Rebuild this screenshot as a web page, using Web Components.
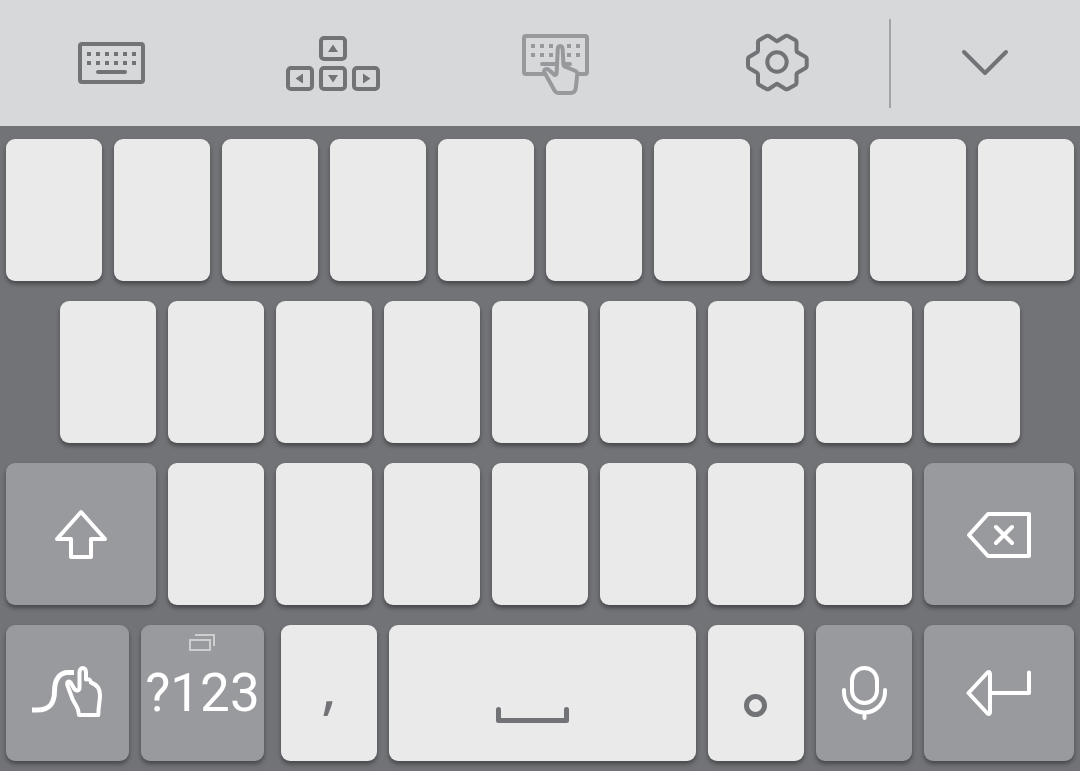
<!DOCTYPE html>
<html lang="en">
<head>
<meta charset="utf-8">
<meta name="viewport" content="width=device-width, initial-scale=1">
<title>Soft keyboard</title>
<style>
  body { margin: 0; background: #727377; font-family: Roboto, "Noto Sans", sans-serif; }
</style>
</head>
<body>
<soft-keyboard></soft-keyboard>
<script>
// Every glyph is drawn on a 96 x 96 field whose origin is its centre.
const ICONS = {
  keyboard: `<rect x="-31" y="-19" width="63" height="38" rx="2"/>
    <path d="M-13 9H14"/>
    <path class="solid" d="M-24-11h4v4h-4zM-15-11h4v4h-4zM-6-11h4v4h-4zM3-11h4v4h-4zM12-11h4v4h-4zM21-11h4v4h-4zM-24-2h4v4h-4zM-15-2h4v4h-4zM-6-2h4v4h-4zM3-2h4v4h-4zM12-2h4v4h-4zM21-2h4v4h-4z"/>`,
  arrows: `<rect x="-12" y="-25" width="24" height="21" rx="3"/>
    <rect x="-45" y="5" width="24" height="21" rx="3"/>
    <rect x="-12" y="5" width="24" height="21" rx="3"/>
    <rect x="21" y="5" width="24" height="21" rx="3"/>
    <path class="solid" d="M-5-11H5L0-18.500zM-5 12H5L0 19.500zM-37.500 15.500L-30 10.500V20.500zM37.500 15.500L30 10.500V20.500z"/>`,
  touch: `<path d="M-12 11H-29a2 2 0 0 1-2-2V-25a2 2 0 0 1 2-2H30a2 2 0 0 1 2 2V9a2 2 0 0 1-2 2H23"/>
    <path d="M-13 1H2M9 1H15"/>
    <path class="solid" d="M-24-19h4v4h-4zM-15-19h4v4h-4zM-6-19h4v4h-4zM12-19h4v4h-4zM21-19h4v4h-4zM-24-10h4v4h-4zM-15-10h4v4h-4zM-6-10h4v4h-4zM12-10h4v4h-4zM21-10h4v4h-4z"/>
    <path d="M2.700-13C2.700-18.500 7.500-18.500 7.700-13L8.500 1.500Q8.500 3 10 3.700L19.500 7.500Q22.500 8.800 22.300 11L20.800 25Q20.200 30 15.500 30H4Q1 30-.500 27.500L-10.500 9.500C-12 6.500-8.500 5-6 7L-1 11.500Q1.300 13 1.600 10z"/>`,
  gear: `<path d="M-10.500-27Q-9.300-27.700-8.100-27L0-21.700L8.500-27Q9.700-27.700 10.900-27L18.500-22.800Q19.500-22.200 19.500-21V-12.500Q19.500-11.300 20.500-10.700L28.700-6Q29.700-5.400 29.700-4.200V3.200Q29.700 4.400 28.700 5L20.500 9.700Q19.500 10.300 19.500 11.500V20Q19.500 21.200 18.500 21.800L10.900 26Q9.700 26.700 8.500 26L0 20.700L-8.100 26Q-9.300 26.700-10.500 26L-18 21.800Q-19 21.200-19 20V11.500Q-19 10.300-20 9.700L-28 5Q-29 4.400-29 3.200V-4.200Q-29-5.400-28-6L-20-10.700Q-19-11.300-19-12.500V-21Q-19-22.200-18-22.800z"/>
    <circle cx="0" cy="-1" r="9.700"/>`,
  chevron: `<path d="M-22-11L-1 10L20-11"/>`,
  shift: `<path d="M0-22L24 5H10V23H-10V5H-24z"/>`,
  backspace: `<path d="M-30 1L-11-20H30V22H-11zM-3-7L13 9M13-7L-3 9"/>`,
  swipe: `<path class="broad" d="M-36 17H-31C-18 17-13.500 10-13.500-2C-13.500-14-8-20.500 0-20.500H6"/>
    <path d="M11.500-20.500C11.500-26.500 18-26.500 18-20.500V-13.500C21-14.500 22.500-13 23-10.500C30-8 32-4 32 2C32 9 30.300 13 30.300 22H11C11 14 7.500 13 4.500 6L-.500-7.500C-2-12 1.500-13 3.500-9L5.500-5.500C7.500-1.500 11.500-1.500 11.500-5z"/>`,
  space: `<path class="thick" d="M-44.500 16.500V27.500H23.500V16.500"/>`,
  dot: `<circle class="thick" cx="-.500" cy="12.500" r="9"/>`,
  mic: `<rect x="-12" y="-25" width="25" height="35" rx="12.500"/>
    <path d="M-20-3V-1A20.500 20.500 0 0 0 21-1V-3M.500 20V25"/>`,
  enter: `<path d="M-30.500 0L-11.500-20.500Q-9-22-9-19V19Q-9 22-11.500 20.500zM-9 0H30V-20.500"/>`
};

function attach(host, html) {
  const template = document.createElement('template');
  template.innerHTML = html;
  const root = host.attachShadow({ mode: 'open' });
  root.append(template.content.cloneNode(true));
  return root;
}

class KbIcon extends HTMLElement {
  connectedCallback() {
    if (this.shadowRoot) return;
    attach(this, `<style>
      :host { display: block; width: 96px; height: 96px; flex: none; }
      svg { display: block; width: 100%; height: 100%; fill: none; stroke: currentColor;
            stroke-width: 4; stroke-linecap: round; stroke-linejoin: round; }
      .solid { fill: currentColor; stroke: none; }
      .thick { stroke-width: 5; }
      .broad { stroke-width: 5; stroke-linecap: butt; }
    </style>
    <svg viewBox="-48 -48 96 96" aria-hidden="true">${ICONS[this.getAttribute('name')]}</svg>`);
  }
}
customElements.define('kb-icon', KbIcon);

class ToolButton extends HTMLElement {
  connectedCallback() {
    if (this.shadowRoot) return;
    attach(this, `<style>
      :host { display: flex; min-width: 0; color: #727377; }
      :host([muted]) { color: #98999c; }
      button { flex: 1; min-width: 0; display: flex; align-items: center; justify-content: center;
               margin: 0; padding: 0; border: 0; background: none; color: inherit; font: inherit; }
    </style>
    <button type="button" aria-label="${this.getAttribute('label')}"><slot></slot></button>`);
  }
}
customElements.define('tool-button', ToolButton);

class KbToolbar extends HTMLElement {
  connectedCallback() {
    if (this.shadowRoot) return;
    attach(this, `<style>
      :host { display: grid; grid-template-columns: repeat(4, 222fr) 3px 189fr;
              height: 126px; background: #d7d8da; }
      .divider { justify-self: end; align-self: center; width: 2px; height: 89px; background: #a2a3a6; }
    </style>
    <tool-button label="Keyboard type"><kb-icon name="keyboard"></kb-icon></tool-button>
    <tool-button label="Text editing"><kb-icon name="arrows"></kb-icon></tool-button>
    <tool-button label="Handwriting" muted><kb-icon name="touch"></kb-icon></tool-button>
    <tool-button label="Settings"><kb-icon name="gear"></kb-icon></tool-button>
    <span class="divider"></span>
    <tool-button label="Close toolbar"><kb-icon name="chevron"></kb-icon></tool-button>`);
  }
}
customElements.define('kb-toolbar', KbToolbar);

class KbKey extends HTMLElement {
  connectedCallback() {
    if (this.shadowRoot) return;
    attach(this, `<style>
      :host { display: flex; min-width: 0; color: #727377; }
      button { position: relative; flex: 1; min-width: 0; display: flex; align-items: center;
               justify-content: center; margin: 0; padding: 0; border: 0; border-radius: 9px;
               background: #eaeaea; color: inherit; font: inherit; font-size: 53px;
               white-space: nowrap; box-shadow: 0 3px 4px rgba(0, 0, 0, .38); }
      :host([dark]) { color: #fff; }
      :host([dark]) button { background: #999a9d; }
      :host([comma]) button { font-family: "Noto Sans", sans-serif; font-size: 60px; padding-bottom: 16px; }
      ::slotted(svg) { position: absolute; top: 9px; left: 50%; margin-left: -14px; }
    </style>
    <button type="button" aria-label="${this.getAttribute('label')}"><slot></slot></button>`);
  }
}
customElements.define('kb-key', KbKey);

class KbRow extends HTMLElement {
  connectedCallback() {
    if (this.shadowRoot) return;
    attach(this, `<style>
      :host { display: flex; gap: 12px; height: 142px; }
      ::slotted(kb-key) { flex: 96 1 0; }
      ::slotted(.wide) { flex-grow: 150; }
      ::slotted(.mode) { flex-grow: 123; }
      ::slotted(.space) { flex-grow: 307; }
    </style><slot></slot>`);
  }
}
customElements.define('kb-row', KbRow);

const letters = s => [...s].map(c => `<kb-key label="${c}"></kb-key>`).join('');

class SoftKeyboard extends HTMLElement {
  connectedCallback() {
    if (this.shadowRoot) return;
    attach(this, `<style>
      :host { display: block; background: #727377; }
      .keys { display: flex; flex-direction: column; gap: 20px; padding: 13px 6px 10px; }
      .home { padding: 0 54px; }
      .bottom { height: 136px; }
      .comma { margin-left: 5px; }
      .pages { fill: none; stroke: #cdced0; stroke-width: 2; }
    </style>
    <kb-toolbar></kb-toolbar>
    <div class="keys">
      <kb-row>${letters('QWERTYUIOP')}</kb-row>
      <kb-row class="home">${letters('ASDFGHJKL')}</kb-row>
      <kb-row>
        <kb-key class="wide" dark label="Shift"><kb-icon name="shift"></kb-icon></kb-key>
        ${letters('ZXCVBNM')}
        <kb-key class="wide" dark label="Backspace"><kb-icon name="backspace"></kb-icon></kb-key>
      </kb-row>
      <kb-row class="bottom">
        <kb-key class="mode" dark label="Swipe input"><kb-icon name="swipe"></kb-icon></kb-key>
        <kb-key class="mode" dark label="?123"><svg class="pages" width="26" height="18" viewBox="0 0 26 18" aria-hidden="true"><path d="M1 6H21V16H1zM6 1H25V12"/></svg>?123</kb-key>
        <kb-key class="comma" comma label="Comma">,</kb-key>
        <kb-key class="space" label="Space"><kb-icon name="space"></kb-icon></kb-key>
        <kb-key label="Period"><kb-icon name="dot"></kb-icon></kb-key>
        <kb-key dark label="Voice input"><kb-icon name="mic"></kb-icon></kb-key>
        <kb-key class="wide" dark label="Enter"><kb-icon name="enter"></kb-icon></kb-key>
      </kb-row>
    </div>`);
  }
}
customElements.define('soft-keyboard', SoftKeyboard);
</script>
</body>
</html>
